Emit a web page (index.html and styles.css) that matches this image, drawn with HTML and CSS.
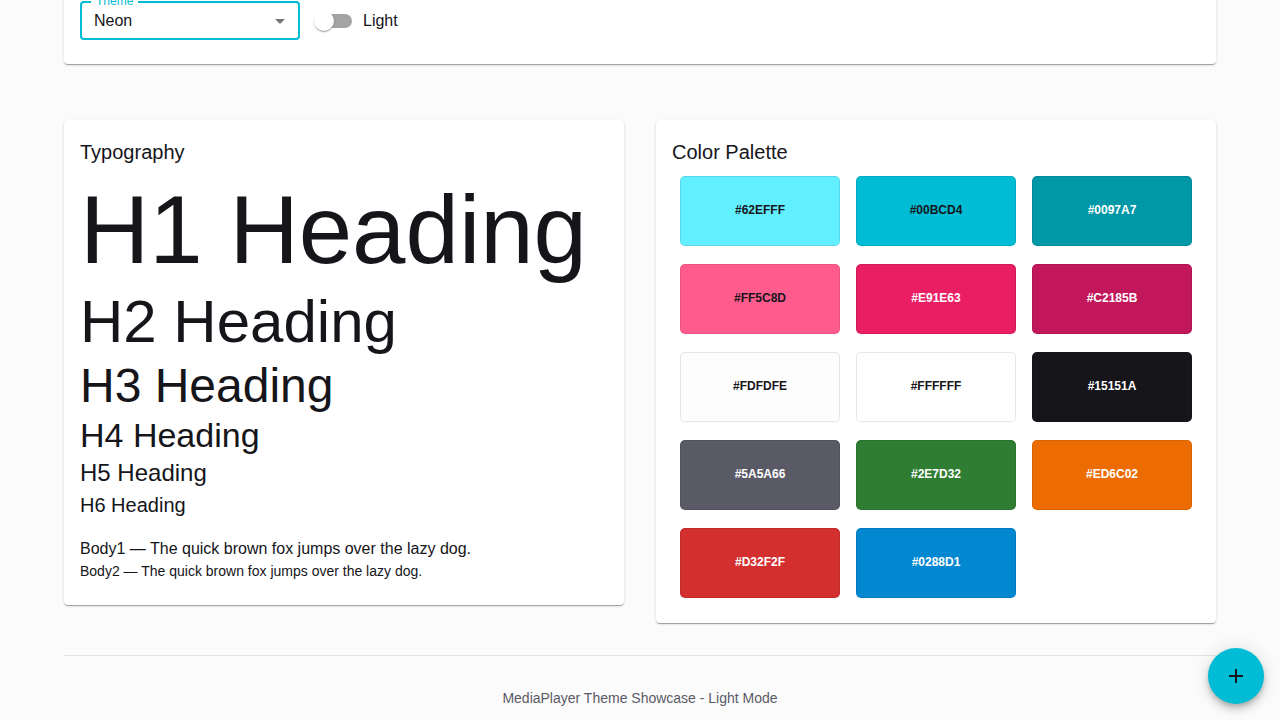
FILE: index.html
```html
<!DOCTYPE html>
<html lang="en">
<head>
<meta charset="utf-8">
<title>MediaPlayer Theme Showcase</title>
<link rel="stylesheet" href="styles.css">
</head>
<body>
<div class="page">
  <section class="card controls">
    <div class="select">
      <span class="select-label">Theme</span>
      <span class="select-value">Neon</span>
      <svg class="select-arrow" width="24" height="24" viewBox="0 0 24 24"><path d="M7 10l5 5 5-5z" fill="rgba(0,0,0,0.54)"/></svg>
    </div>
    <label class="switch-wrap">
      <span class="switch"><span class="track"></span><span class="thumb"></span></span>
      <span class="switch-text">Light</span>
    </label>
  </section>

  <div class="grid">
    <section class="card typo">
      <h2 class="card-title">Typography</h2>
      <div class="h1">H1 Heading</div>
      <div class="h2">H2 Heading</div>
      <div class="h3">H3 Heading</div>
      <div class="h4">H4 Heading</div>
      <div class="h5">H5 Heading</div>
      <div class="h6">H6 Heading</div>
      <p class="body1">Body1 — The quick brown fox jumps over the lazy dog.</p>
      <p class="body2">Body2 — The quick brown fox jumps over the lazy dog.</p>
    </section>

    <section class="card palette">
      <h2 class="card-title">Color Palette</h2>
      <div class="swatches">
        <div class="swatch dark-text" style="background:#62EFFF">#62EFFF</div>
        <div class="swatch dark-text" style="background:#00BCD4">#00BCD4</div>
        <div class="swatch light-text" style="background:#0097A7">#0097A7</div>
        <div class="swatch dark-text" style="background:#FF5C8D">#FF5C8D</div>
        <div class="swatch light-text" style="background:#E91E63">#E91E63</div>
        <div class="swatch light-text" style="background:#C2185B">#C2185B</div>
        <div class="swatch dark-text" style="background:#FDFDFE">#FDFDFE</div>
        <div class="swatch dark-text" style="background:#FFFFFF">#FFFFFF</div>
        <div class="swatch light-text" style="background:#15151A">#15151A</div>
        <div class="swatch light-text" style="background:#5A5A66">#5A5A66</div>
        <div class="swatch light-text" style="background:#2E7D32">#2E7D32</div>
        <div class="swatch light-text" style="background:#ED6C02">#ED6C02</div>
        <div class="swatch light-text" style="background:#D32F2F">#D32F2F</div>
        <div class="swatch light-text" style="background:#0288D1">#0288D1</div>
      </div>
    </section>
  </div>

  <footer class="footer">MediaPlayer Theme Showcase - Light Mode</footer>
</div>

<button class="fab" aria-label="add">
  <svg width="24" height="24" viewBox="0 0 24 24"><path d="M19 13h-6v6h-2v-6H5v-2h6V5h2v6h6v2z" fill="#15151A"/></svg>
</button>
</body>
</html>
```

FILE: styles.css
```css
* { box-sizing: border-box; }
html, body { margin: 0; padding: 0; }
body {
  background: #fbfbfc;
  color: #15151A;
  font-family: "Liberation Sans", Arial, sans-serif;
}
.page {
  width: 1152px;
  margin: -16px auto 0;
}
.card {
  background: #fff;
  border-radius: 4px;
  box-shadow: 0 2px 1px -1px rgba(0,0,0,0.2), 0 1px 1px 0 rgba(0,0,0,0.14), 0 1px 3px 0 rgba(0,0,0,0.12);
}
.controls {
  display: flex;
  align-items: center;
  gap: 14px;
  padding: 17px 16px 24px;
}
.select {
  position: relative;
  width: 220px;
  height: 39px;
  border: 2px solid #00BCD4;
  border-radius: 4px;
  display: flex;
  align-items: center;
  padding: 0 12px;
}
.select-label {
  position: absolute;
  top: -8px;
  left: 9px;
  padding: 0 5px;
  background: #fff;
  color: #00BCD4;
  font-size: 12px;
  line-height: 12px;
}
.select-value { font-size: 16px; flex: 1; }
.select-arrow { margin-right: -6px; }
.switch-wrap {
  display: flex;
  align-items: center;
  gap: 11px;
}
.switch {
  position: relative;
  width: 38px;
  height: 20px;
  display: flex;
  align-items: center;
}
.track {
  display: block;
  width: 37px;
  height: 14px;
  margin-left: 1px;
  border-radius: 7px;
  background: #a3a3a3;
}
.thumb {
  position: absolute;
  left: 0;
  top: 0;
  width: 20px;
  height: 20px;
  border-radius: 50%;
  background: #fff;
  box-shadow: 0 2px 1px -1px rgba(0,0,0,0.2), 0 1px 1px 0 rgba(0,0,0,0.14), 0 1px 3px 0 rgba(0,0,0,0.12);
}
.switch-text { font-size: 16px; }

.grid {
  display: grid;
  grid-template-columns: 1fr 1fr;
  gap: 32px;
  align-items: start;
  margin-top: 56px;
}
.typo { padding: 16px 16px 24px; }
.palette { padding: 16px 16px 25px; }
.card-title {
  margin: 0 0 6px;
  font-size: 20px;
  line-height: 32px;
  font-weight: 400;
}
.h1 { font-size: 96px; line-height: 112px; }
.h2 { font-size: 60px; line-height: 72px; }
.h3 { font-size: 48px; line-height: 56px; }
.h4 { font-size: 34px; line-height: 42px; margin-bottom: 1px; }
.h5 { font-size: 24px; line-height: 32px; }
.h6 { font-size: 20px; line-height: 32px; }
.body1 { margin: 16px 0 0; font-size: 16px; line-height: 24px; }
.body2 { margin: 0; font-size: 14px; line-height: 20px; }

.palette .card-title { margin-bottom: 8px; }
.swatches {
  display: grid;
  grid-template-columns: repeat(3, 160px);
  gap: 18px 16px;
  padding: 0 8px;
}
.swatch {
  height: 70px;
  border: 1px solid rgba(0,0,0,0.09);
  border-radius: 5px;
  display: flex;
  align-items: center;
  justify-content: center;
  padding-bottom: 2px;
  font-size: 12px;
  font-weight: 700;
}
.dark-text { color: #15151A; }
.light-text { color: #fff; }

.footer {
  margin-top: 32px;
  border-top: 1px solid #e4e4e6;
  padding: 32px 0 14px;
  text-align: center;
  font-size: 14px;
  line-height: 20px;
  color: #5A5A66;
}
.fab {
  position: fixed;
  right: 16px;
  bottom: 16px;
  width: 56px;
  height: 56px;
  border: none;
  border-radius: 50%;
  background: #00BCD4;
  display: flex;
  align-items: center;
  justify-content: center;
  padding: 0;
  box-shadow: 0 3px 5px -1px rgba(0,0,0,0.2), 0 6px 10px 0 rgba(0,0,0,0.14), 0 1px 18px 0 rgba(0,0,0,0.12);
}
```
